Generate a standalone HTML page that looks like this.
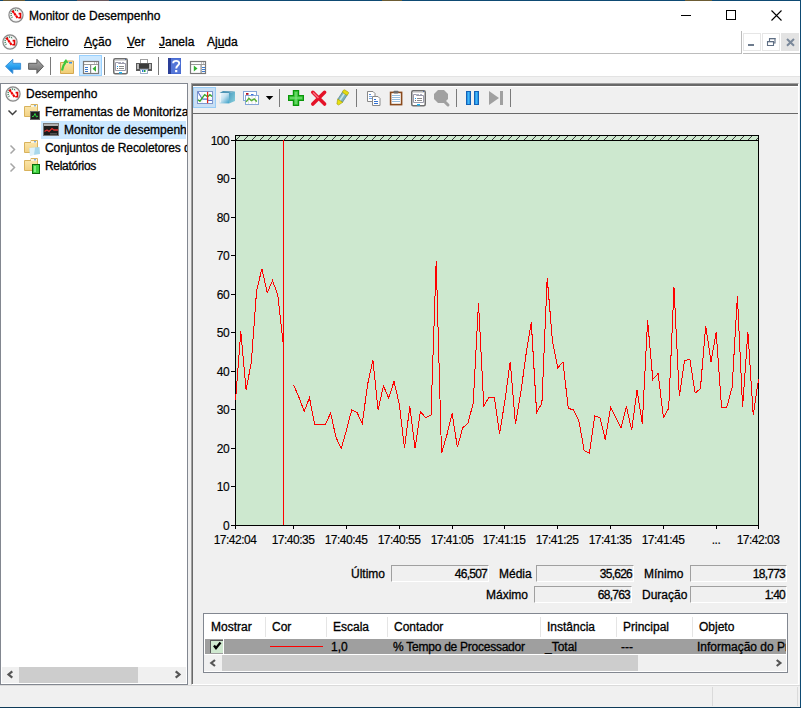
<!DOCTYPE html>
<html><head><meta charset="utf-8">
<style>
html,body{margin:0;padding:0;}
body{width:801px;height:708px;overflow:hidden;position:relative;background:#f0f0f0;font-family:"Liberation Sans",sans-serif;font-size:12px;color:#000;-webkit-text-stroke:0.3px #000;}
.a{position:absolute;}
.t{position:absolute;white-space:nowrap;line-height:14px;}
.yl{position:absolute;left:190px;width:39px;text-align:right;line-height:16px;font-size:12px;letter-spacing:-0.6px;-webkit-text-stroke:0.15px #000;}
.xl{position:absolute;top:533px;width:80px;text-align:center;line-height:14px;font-size:12px;letter-spacing:-0.5px;-webkit-text-stroke:0.15px #000;}
.box{position:absolute;height:17px;letter-spacing:-0.75px;background:#f0f0f0;border-top:1px solid #a0a0a0;border-left:1px solid #a0a0a0;border-bottom:1px solid #fff;border-right:1px solid #fff;box-sizing:border-box;text-align:right;padding-right:1px;line-height:16px;}
.u{text-decoration:underline;}
</style></head><body>
<!-- window frame -->
<div class="a" style="left:0;top:0;width:801px;height:1px;background:#0e4a73"></div>
<div class="a" style="left:3px;top:0;width:22px;height:1px;background:#6c5c34"></div>
<div class="a" style="left:77px;top:0;width:32px;height:1px;background:#6e5a5e"></div>
<div class="a" style="left:382px;top:0;width:20px;height:1px;background:#6c5c34"></div>
<div class="a" style="left:685px;top:0;width:27px;height:1px;background:#6c5c34"></div>
<div class="a" style="left:800px;top:0;width:1px;height:708px;background:#0e4a73"></div>
<div class="a" style="left:0;top:707px;width:801px;height:1px;background:#0d3a58"></div>
<!-- title bar -->
<div class="a" style="left:0;top:1px;width:800px;height:30px;background:#fff"></div>
<div class="t" style="left:29px;top:9px;">Monitor de Desempenho</div>
<svg class="a" style="left:0;top:0" width="801" height="31">
<path d="M681,15.5 H691" stroke="#000" stroke-width="1"/>
<rect x="726.5" y="10.5" width="9" height="9" fill="none" stroke="#000" stroke-width="1"/>
<path d="M771.5,10.5 L781.5,20.5 M781.5,10.5 L771.5,20.5" stroke="#000" stroke-width="1.1"/>
</svg>
<!-- menu bar -->
<div class="a" style="left:0;top:31px;width:800px;height:23px;background:#fff"></div>
<div class="a" style="left:0;top:53px;width:742px;height:1px;background:#bcbcbc"></div>
<div class="a" style="left:741px;top:31px;width:1px;height:23px;background:#bcbcbc"></div>
<div class="a" style="left:743px;top:53px;width:57px;height:1px;background:#bcbcbc"></div>
<div class="t" style="left:26px;top:35px;"><span class="u">F</span>icheiro</div>
<div class="t" style="left:84px;top:35px;"><span class="u">A</span>ção</div>
<div class="t" style="left:127px;top:35px;"><span class="u">V</span>er</div>
<div class="t" style="left:159px;top:35px;"><span class="u">J</span>anela</div>
<div class="t" style="left:207px;top:35px;">Aj<span class="u">u</span>da</div>
<!-- MDI buttons -->
<div class="a" style="left:743px;top:33px;width:16px;height:16px;border:1px solid #e6e6e6;background:#fff"></div>
<div class="a" style="left:762px;top:33px;width:16px;height:16px;border:1px solid #e6e6e6;background:#fff"></div>
<div class="a" style="left:781px;top:33px;width:18px;height:18px;background:#e3e3e3"></div>
<svg class="a" style="left:740px;top:30px" width="60" height="24">
<rect x="8" y="14" width="6" height="2" fill="#6d7b8d"/>
<path d="M27.5,11.5 h6 v4 h-6 z M29.5,11 v-2.5 h5.5 v4.5 h-1.5" fill="none" stroke="#5f6f84" stroke-width="1.1"/><rect x="27" y="11" width="7" height="1.3" fill="#5f6f84"/><rect x="29" y="8" width="6.5" height="1.3" fill="#5f6f84"/>
<path d="M47,9 L54,15.8 M54,9 L47,15.8" stroke="#7a889a" stroke-width="2"/>
</svg>
<!-- toolbar -->
<div class="a" style="left:0;top:54px;width:800px;height:22px;background:#fff"></div>
<div class="a" style="left:0;top:76px;width:800px;height:1px;background:#e3e3e3"></div>
<div class="a" style="left:79px;top:55px;width:23px;height:21px;box-sizing:border-box;background:#cce8ff;border:1px solid #99d1ff"></div>
<svg class="a" style="left:0;top:50px" width="220" height="30">
<defs>
<linearGradient id="gb" x1="0" y1="0" x2="0" y2="1"><stop offset="0" stop-color="#6cc8fa"/><stop offset="0.5" stop-color="#2aa2f0"/><stop offset="1" stop-color="#0a6cc8"/></linearGradient>
<linearGradient id="gg" x1="0" y1="0" x2="0" y2="1"><stop offset="0" stop-color="#b0b0b0"/><stop offset="0.5" stop-color="#8c8c8c"/><stop offset="1" stop-color="#6e6e6e"/></linearGradient>
<linearGradient id="gf" x1="0" y1="0" x2="0" y2="1"><stop offset="0" stop-color="#fbe7a8"/><stop offset="1" stop-color="#f0cc74"/></linearGradient>
</defs>
<!-- back -->
<path d="M5.5,16.3 L12.8,9.3 V13.3 H20.6 V19.3 H12.8 V23.4 Z" fill="url(#gb)" stroke="#3d92d8" stroke-width="1" stroke-linejoin="round"/>
<!-- forward -->
<path d="M43.5,16.3 L36.9,9.3 V13.3 H28.6 V19.3 H36.9 V23.4 Z" fill="url(#gg)" stroke="#5c5c5c" stroke-width="1" stroke-linejoin="round"/>
<rect x="50" y="7" width="1" height="18" fill="#7a7a7a"/>
<!-- folder up -->
<path d="M60.5,12.5 H66 L67,11 H73.5 V23.5 H60.5 Z" fill="url(#gf)" stroke="#d4a850" stroke-width="1"/>
<rect x="69" y="12" width="3" height="1.5" fill="#3a8ee8"/>
<path d="M62,20.5 C62.5,17 64,14 65.5,12.5" fill="none" stroke="#3cc83c" stroke-width="2.2"/>
<path d="M63,12.5 L66,9 L68.5,13 Z" fill="#3cc83c"/>
<!-- window with left pane -->
<rect x="83.5" y="11.5" width="15" height="12" fill="#fff" stroke="#7a7a7a" stroke-width="1.2"/>
<rect x="84" y="14" width="14" height="1" fill="#9a9a9a"/><rect x="94" y="12.5" width="1" height="1" fill="#8a8a8a"/><rect x="96" y="12.5" width="1" height="1" fill="#8a8a8a"/>
<rect x="90" y="15" width="1.2" height="8" fill="#8a8a8a"/>
<rect x="85" y="17" width="3" height="1" fill="#3a7ad0"/><rect x="85" y="19" width="3" height="1" fill="#3a7ad0"/><rect x="85" y="21" width="3" height="1" fill="#3a7ad0"/>
<path d="M96,15.8 L92.5,18.8 L96,21.8 Z" fill="#30b030"/>
<rect x="104" y="7" width="1" height="18" fill="#7a7a7a"/>
<!-- properties -->
<rect x="113.75" y="8.75" width="13.5" height="15" rx="1.5" fill="#fff" stroke="#6e6e6e" stroke-width="1.5"/>
<rect x="115" y="10" width="11" height="1" fill="#d8d8d8"/>
<rect x="125" y="9" width="1" height="1" fill="#4a6aa8"/>
<path d="M115.5,12.5 H118.5 V13.5 H125.5 V20.5 H115.5 Z" fill="#fff" stroke="#9a9aaa" stroke-width="1"/>
<rect x="119" y="12" width="2" height="1" fill="#b0b0c0"/><rect x="122" y="12" width="2" height="1" fill="#b0b0c0"/>
<rect x="117" y="16" width="1" height="1" fill="#10a0f8"/><rect x="119" y="16" width="5" height="1" fill="#8a8a8a"/>
<rect x="117" y="18" width="1" height="1" fill="#707070"/><rect x="119" y="18" width="5" height="1" fill="#8a8a8a"/>
<rect x="119" y="22" width="3" height="1.5" fill="#20b8f8"/>
<!-- printer -->
<rect x="140.5" y="9.5" width="7" height="4" fill="#fff" stroke="#a0a0a0" stroke-width="1"/>
<rect x="136" y="13" width="16" height="8" fill="#5a5a5a"/>
<rect x="137" y="14" width="2" height="5" fill="#b8b8b8"/><rect x="149" y="14" width="2" height="5" fill="#b8b8b8"/>
<rect x="139" y="14" width="10" height="4" fill="#3a3a3a"/>
<rect x="140.5" y="19.5" width="7" height="4" fill="#fff" stroke="#a0b0c8" stroke-width="1"/>
<rect x="142" y="20" width="1.5" height="2" fill="#2a7ad8"/><rect x="144" y="20" width="1.5" height="2" fill="#20a040"/>
<rect x="158" y="7" width="1" height="18" fill="#7a7a7a"/>
<!-- help -->
<rect x="168" y="8" width="13" height="16" fill="#3f62cc"/>
<rect x="168" y="8" width="3" height="16" fill="#2a3e98"/>
<rect x="171" y="8.5" width="9.5" height="15" fill="#5576d8"/>
<path d="M173.2,13.2 C173.2,10.2 179.2,10 179.2,13.2 C179.2,15.6 176.2,15.6 176.2,18.6" fill="none" stroke="#fff" stroke-width="1.9"/><rect x="175.1" y="20" width="2.2" height="2.2" fill="#fff"/>
<!-- window with play -->
<rect x="190.5" y="11.5" width="15" height="12" fill="#fff" stroke="#7a7a7a" stroke-width="1.2"/>
<rect x="191" y="14" width="14" height="1" fill="#9a9a9a"/><rect x="201" y="12.5" width="1" height="1" fill="#8a8a8a"/><rect x="203" y="12.5" width="1" height="1" fill="#8a8a8a"/>
<rect x="200.5" y="15" width="1.2" height="8" fill="#8a8a8a"/>
<rect x="202" y="17" width="3" height="1" fill="#3a7ad0"/><rect x="202" y="19" width="3" height="1" fill="#3a7ad0"/><rect x="202" y="21" width="3" height="1" fill="#3a7ad0"/>
<path d="M193.8,15.5 L197.5,18.5 L193.8,21.5 Z" fill="#30b030"/>
</svg>

<!-- left pane -->
<div class="a" style="left:0;top:83px;width:188px;height:602px;box-sizing:border-box;border:1px solid #828790;background:#fff"></div>
<div class="a" style="left:41px;top:121px;width:145px;height:18px;background:#cce8ff"></div>
<svg class="a" style="left:0;top:80px" width="70" height="100">
<defs>
<linearGradient id="gf2" x1="0" y1="0" x2="0" y2="1"><stop offset="0" stop-color="#fce9b0"/><stop offset="1" stop-color="#f2d184"/></linearGradient>
<g id="fold">
<path d="M0.5,2.5 H7 V0.5 H13.5 V12.5 H0.5 Z" fill="url(#gf2)" stroke="#d8b25c" stroke-width="1"/>
<rect x="7" y="1" width="6" height="2" fill="#fff6d8"/>
<rect x="10" y="1.3" width="2" height="1" fill="#4a90e0"/>
</g>
</defs>
<!-- chevron down -->
<path d="M8.5,30.5 L12.5,34.5 L16.5,30.5" fill="none" stroke="#404040" stroke-width="1.5"/>
<!-- folder 1 -->
<use href="#fold" x="24" y="24"/>
<rect x="30.5" y="31.5" width="9" height="8" fill="#1e1e1e" stroke="#686868" stroke-width="1"/>
<path d="M32,36.5 L33.5,36.5 L35,33.5 L36.5,37 L38,36" fill="none" stroke="#30d040" stroke-width="1"/>
<!-- monitor icon -->
<rect x="43.5" y="43.5" width="15" height="12" fill="#1c1c1c" stroke="#787878" stroke-width="1"/>
<rect x="44" y="44" width="14" height="2" fill="#b0b0b0"/>
<path d="M44.5,51.5 L47,50 L49,51.5 L52,48.5 L54,50 L58,50" fill="none" stroke="#e03030" stroke-width="1.3"/>
<rect x="50" y="53.5" width="7" height="0.8" fill="#808080"/>
<!-- chevron right 1 -->
<path d="M10.5,65.5 L14.5,69.5 L10.5,73.5" fill="none" stroke="#a6a6a6" stroke-width="1.5"/>
<use href="#fold" x="24" y="60"/>
<path d="M29.5,68 L39.5,67 L40,74 L30,75.5 Z" fill="#a8d8ec"/>
<path d="M29.5,68 L35,67.5 L34,75 L30,75.5 Z" fill="#dff2fa"/>
<!-- chevron right 2 -->
<path d="M10.5,83.5 L14.5,87.5 L10.5,91.5" fill="none" stroke="#a6a6a6" stroke-width="1.5"/>
<use href="#fold" x="24" y="78"/>
<rect x="32.5" y="84.5" width="7" height="9" fill="#40d040" stroke="#0a6a0a" stroke-width="1"/>
<rect x="34" y="86" width="2" height="6" fill="#80f080"/>
</svg>

<svg class="a" style="left:0;top:0" width="40" height="120">
<defs>
<g id="gauge">
<circle cx="8" cy="8" r="7" fill="#fdfdfd" stroke="#8a8a8a" stroke-width="1.4"/>
<circle cx="8" cy="8" r="6" fill="none" stroke="#e2e2e2" stroke-width="0.6"/>
<path d="M4.4,10.6 A4.3,4.3 0 0 1 10.6,4.4" fill="none" stroke="#4f8a6a" stroke-width="1.5" stroke-dasharray="1.1,0.8"/>
<path d="M10.6,6.6 H12.5 V10.7 H10.3" fill="none" stroke="#e00000" stroke-width="1.6"/>
<path d="M4.4,3.7 L9.6,10.9" fill="none" stroke="#f00000" stroke-width="2.1" stroke-dasharray="2.6,0.5"/>
</g>
</defs>
<use href="#gauge" x="8" y="7"/>
<use href="#gauge" x="2" y="34"/>
<use href="#gauge" x="5" y="86"/>
</svg>

<div class="t" style="left:26px;top:87px;">Desempenho</div>
<div class="t" style="left:45px;top:105px;width:142px;overflow:hidden">Ferramentas de Monitorização</div>
<div class="a" style="left:41px;top:121px;width:145px;height:18px;overflow:hidden"><div class="t" style="left:23px;top:2px;">Monitor de desempenho</div></div>
<div class="t" style="left:45px;top:141px;width:142px;overflow:hidden;letter-spacing:-0.1px">Conjuntos de Recoletores de Dados</div>
<div class="t" style="left:45px;top:159px;letter-spacing:-0.3px">Relatórios</div>
<!-- left scrollbar -->
<div class="a" style="left:2px;top:667px;width:184px;height:16px;background:#f0f0f0"></div>
<div class="a" style="left:19px;top:667px;width:119px;height:16px;background:#cdcdcd"></div>
<svg class="a" style="left:0;top:660px" width="188" height="30">
<path d="M12.3,11.3 L8.5,14.5 L12.3,17.7" fill="none" stroke="#555" stroke-width="2.2"/>
<path d="M175.7,11.3 L179.5,14.5 L175.7,17.7" fill="none" stroke="#555" stroke-width="2.2"/>
</svg>
<!-- right pane -->
<div class="a" style="left:191px;top:83px;width:608px;height:602px;box-sizing:border-box;border-top:1px solid #a0a0a0;border-left:1px solid #a0a0a0;border-right:1px solid #fff;border-bottom:1px solid #fff;"></div>
<div class="a" style="left:192px;top:84px;width:606px;height:600px;box-sizing:border-box;border-top:2px solid #696969;border-left:1px solid #696969;"></div>
<div class="a" style="left:193px;top:113px;width:605px;height:1px;background:#696969"></div>
<div class="a" style="left:193px;top:87px;width:23px;height:21px;box-sizing:border-box;background:#c9dff4;border:1px solid #99cdf6"></div>
<div class="a" style="left:193px;top:86px;width:605px;height:1px;background:#fff"></div>
<svg class="a" style="left:190px;top:85px" width="330" height="25">
<defs>
<linearGradient id="gp" x1="0" y1="0" x2="1" y2="0"><stop offset="0" stop-color="#1a7ad8"/><stop offset="0.5" stop-color="#40b8f8"/><stop offset="1" stop-color="#1a7ad8"/></linearGradient>
<linearGradient id="gc" x1="0" y1="0" x2="1" y2="1"><stop offset="0" stop-color="#f4fafe"/><stop offset="0.45" stop-color="#c6e2f0"/><stop offset="1" stop-color="#3aa0c8"/></linearGradient><linearGradient id="gc2" x1="0" y1="0" x2="1" y2="1"><stop offset="0" stop-color="#4a9cc0"/><stop offset="1" stop-color="#8ad0dc"/></linearGradient>
</defs>
<!-- graph icon -->
<rect x="7.5" y="6.5" width="15" height="12" fill="#fff" stroke="#7d96cc" stroke-width="1"/>
<path d="M8,10 H22 M8,14 H22 M12,7 V18 M17,7 V18" stroke="#e2eaf8" stroke-width="1"/>
<path d="M8,7 L12.1,13.7 L12.9,14.1 H16.9 L18.4,15.5 H22" fill="none" stroke="#5a74cc" stroke-width="1.1"/>
<path d="M7.9,14.8 L9.9,16.3 L12.5,12.6 L14.7,9.7 L16.2,10.8 L17.6,11.9 L19.9,9.7 L22,11.5" fill="none" stroke="#38a828" stroke-width="1.4"/>
<rect x="17" y="6.8" width="1.2" height="11.4" fill="#e82818"/>
<!-- cube -->
<path d="M29.5,8 L33,6 L45,6.5 L39,8 Z" fill="#4e94b4"/>
<path d="M39,8 L45,6.5 V16 L39,18.4 Z" fill="url(#gc2)"/>
<rect x="29.5" y="8" width="9.5" height="10.4" fill="url(#gc)"/>
<path d="M30.5,9 V17.5" stroke="#fff" stroke-width="0.8" opacity="0.8"/>
<!-- report icon -->
<rect x="53.5" y="6.5" width="13" height="9" fill="#fff" stroke="#86a6d8" stroke-width="1"/>
<rect x="56" y="8" width="2.5" height="1.8" fill="#b01020"/><rect x="61" y="9" width="2.5" height="1" fill="#3a70e0"/>
<rect x="55.5" y="10.5" width="13" height="9" fill="#fff" stroke="#86a6d8" stroke-width="1"/>
<path d="M58.5,11 V19 M62,11 V19 M65.5,11 V19" stroke="#e4e4e4" stroke-width="1"/><path d="M56.1,16.9 L58.9,13.4 L61.4,15.6 L64.2,14 L66.8,16.6" fill="none" stroke="#58b038" stroke-width="1.5"/>
<!-- dropdown -->
<path d="M75.8,11 H83.3 L79.5,15 Z" fill="#000"/>
<rect x="89" y="4" width="1" height="18" fill="#7a7a7a"/>
<!-- plus -->
<path d="M103.4,5.6 H108.6 V10.6 H113.4 V15.4 H108.6 V20.4 H103.4 V15.4 H98.6 V10.6 H103.4 Z" fill="#40c840" stroke="#0a960a" stroke-width="1.2"/>
<path d="M106,7 V19 M100,13 H112" stroke="#86e486" stroke-width="1"/>
<!-- red x -->
<path d="M122.8,7.3 L134.6,19.1 M134.6,7.3 L122.8,19.1" stroke="#e41228" stroke-width="3.6" stroke-linecap="round"/>
<path d="M123,7.5 L128.5,13" stroke="#f87080" stroke-width="1.5"/>
<!-- pencil -->
<g transform="translate(151.8,13.2) rotate(33)">
<rect x="-2.8" y="-6" width="5.6" height="9" fill="#7fb2bc" stroke="#4f7f88" stroke-width="0.6"/>
<rect x="-1.2" y="-6" width="1.6" height="9" fill="#c8e4e8"/>
<rect x="-3" y="-8.6" width="6" height="3.4" rx="1" fill="#e6dc10" stroke="#9a9400" stroke-width="0.5"/>
<path d="M-3,3 H3 L1,7.5 H-1 Z" fill="#e8e010" stroke="#9a9400" stroke-width="0.5"/>
</g>
<rect x="166" y="4" width="1" height="18" fill="#7a7a7a"/>
<!-- copy -->
<path d="M177.5,6.5 H183 L185,8.5 V16.5 H177.5 Z" fill="#fff" stroke="#888" stroke-width="1"/>
<rect x="179" y="9" width="2" height="0.8" fill="#3070d0"/><rect x="179" y="11" width="3" height="0.8" fill="#5090e0"/><rect x="179" y="13" width="3" height="0.8" fill="#5090e0"/>
<path d="M182.5,11.5 H188 L190,13.5 V20.5 H182.5 Z" fill="#fff" stroke="#888" stroke-width="1"/>
<rect x="184" y="14" width="2" height="1" fill="#3070d0"/><rect x="184" y="16" width="4" height="1" fill="#3070d0"/><rect x="184" y="18" width="4" height="1" fill="#3070d0"/>
<!-- clipboard -->
<rect x="200.6" y="7.4" width="11" height="12.2" fill="#fff" stroke="#8a4a1c" stroke-width="1.6"/>
<rect x="203.5" y="5.8" width="5" height="2.6" rx="0.8" fill="#6c6c6c"/>
<path d="M202,10.5 H210 M202,12.5 H210 M202,14.5 H210 M202,16.5 H210" stroke="#8ab4d8" stroke-width="0.9"/>
<!-- properties -->
<rect x="221.75" y="5.75" width="13.5" height="15" rx="1.5" fill="#fff" stroke="#6e6e6e" stroke-width="1.5"/>
<rect x="223" y="7" width="11" height="1" fill="#d8d8d8"/>
<rect x="233" y="6" width="1" height="1" fill="#4a6aa8"/>
<path d="M223.5,9.5 H226.5 V10.5 H233.5 V17.5 H223.5 Z" fill="#fff" stroke="#9a9aaa" stroke-width="1"/>
<rect x="227" y="9" width="2" height="1" fill="#b0b0c0"/><rect x="230" y="9" width="2" height="1" fill="#b0b0c0"/>
<rect x="225" y="13" width="1" height="1" fill="#10a0f8"/><rect x="227" y="13" width="5" height="1" fill="#8a8a8a"/>
<rect x="225" y="15" width="1" height="1" fill="#707070"/><rect x="227" y="15" width="5" height="1" fill="#8a8a8a"/>
<rect x="227" y="19" width="3" height="1.5" fill="#20b8f8"/>
<!-- magnifier -->
<path d="M246,5 H252 L256,9 V14 L252,18 H246 L242,14 V9 Z" fill="#a0a0a0" transform="translate(2,0) scale(1,1)"/>
<path d="M253.5,15.5 L258,20" stroke="#a0a0a0" stroke-width="3" stroke-linecap="round"/>
<rect x="266" y="4" width="1" height="18" fill="#7a7a7a"/>
<!-- pause -->
<rect x="276.5" y="6.5" width="4" height="13" fill="url(#gp)" stroke="#1262b8" stroke-width="1"/>
<rect x="284.5" y="6.5" width="4" height="13" fill="url(#gp)" stroke="#1262b8" stroke-width="1"/>
<!-- next -->
<path d="M299,6 L309,13 L299,20 Z" fill="#a0a0a0"/>
<rect x="310" y="6" width="3" height="14" fill="#a0a0a0"/>
<rect x="320" y="4" width="1" height="18" fill="#7a7a7a"/>
</svg>

<svg class="a" style="left:0;top:0" width="801" height="708">
<defs><clipPath id="hc"><rect x="236" y="136" width="522" height="4"/></clipPath></defs>
<rect x="235" y="135" width="524" height="391" fill="#cde8cf"/><path d="M236,139 h1 v1 h-1 z M237,138 h1 v1 h-1 z M238,137 h1 v1 h-1 z M239,136 h1 v1 h-1 z M244,139 h1 v1 h-1 z M245,138 h1 v1 h-1 z M246,137 h1 v1 h-1 z M247,136 h1 v1 h-1 z M252,139 h1 v1 h-1 z M253,138 h1 v1 h-1 z M254,137 h1 v1 h-1 z M255,136 h1 v1 h-1 z M260,139 h1 v1 h-1 z M261,138 h1 v1 h-1 z M262,137 h1 v1 h-1 z M263,136 h1 v1 h-1 z M268,139 h1 v1 h-1 z M269,138 h1 v1 h-1 z M270,137 h1 v1 h-1 z M271,136 h1 v1 h-1 z M276,139 h1 v1 h-1 z M277,138 h1 v1 h-1 z M278,137 h1 v1 h-1 z M279,136 h1 v1 h-1 z M284,139 h1 v1 h-1 z M285,138 h1 v1 h-1 z M286,137 h1 v1 h-1 z M287,136 h1 v1 h-1 z M292,139 h1 v1 h-1 z M293,138 h1 v1 h-1 z M294,137 h1 v1 h-1 z M295,136 h1 v1 h-1 z M300,139 h1 v1 h-1 z M301,138 h1 v1 h-1 z M302,137 h1 v1 h-1 z M303,136 h1 v1 h-1 z M308,139 h1 v1 h-1 z M309,138 h1 v1 h-1 z M310,137 h1 v1 h-1 z M311,136 h1 v1 h-1 z M316,139 h1 v1 h-1 z M317,138 h1 v1 h-1 z M318,137 h1 v1 h-1 z M319,136 h1 v1 h-1 z M324,139 h1 v1 h-1 z M325,138 h1 v1 h-1 z M326,137 h1 v1 h-1 z M327,136 h1 v1 h-1 z M332,139 h1 v1 h-1 z M333,138 h1 v1 h-1 z M334,137 h1 v1 h-1 z M335,136 h1 v1 h-1 z M340,139 h1 v1 h-1 z M341,138 h1 v1 h-1 z M342,137 h1 v1 h-1 z M343,136 h1 v1 h-1 z M348,139 h1 v1 h-1 z M349,138 h1 v1 h-1 z M350,137 h1 v1 h-1 z M351,136 h1 v1 h-1 z M356,139 h1 v1 h-1 z M357,138 h1 v1 h-1 z M358,137 h1 v1 h-1 z M359,136 h1 v1 h-1 z M364,139 h1 v1 h-1 z M365,138 h1 v1 h-1 z M366,137 h1 v1 h-1 z M367,136 h1 v1 h-1 z M372,139 h1 v1 h-1 z M373,138 h1 v1 h-1 z M374,137 h1 v1 h-1 z M375,136 h1 v1 h-1 z M380,139 h1 v1 h-1 z M381,138 h1 v1 h-1 z M382,137 h1 v1 h-1 z M383,136 h1 v1 h-1 z M388,139 h1 v1 h-1 z M389,138 h1 v1 h-1 z M390,137 h1 v1 h-1 z M391,136 h1 v1 h-1 z M396,139 h1 v1 h-1 z M397,138 h1 v1 h-1 z M398,137 h1 v1 h-1 z M399,136 h1 v1 h-1 z M404,139 h1 v1 h-1 z M405,138 h1 v1 h-1 z M406,137 h1 v1 h-1 z M407,136 h1 v1 h-1 z M412,139 h1 v1 h-1 z M413,138 h1 v1 h-1 z M414,137 h1 v1 h-1 z M415,136 h1 v1 h-1 z M420,139 h1 v1 h-1 z M421,138 h1 v1 h-1 z M422,137 h1 v1 h-1 z M423,136 h1 v1 h-1 z M428,139 h1 v1 h-1 z M429,138 h1 v1 h-1 z M430,137 h1 v1 h-1 z M431,136 h1 v1 h-1 z M436,139 h1 v1 h-1 z M437,138 h1 v1 h-1 z M438,137 h1 v1 h-1 z M439,136 h1 v1 h-1 z M444,139 h1 v1 h-1 z M445,138 h1 v1 h-1 z M446,137 h1 v1 h-1 z M447,136 h1 v1 h-1 z M452,139 h1 v1 h-1 z M453,138 h1 v1 h-1 z M454,137 h1 v1 h-1 z M455,136 h1 v1 h-1 z M460,139 h1 v1 h-1 z M461,138 h1 v1 h-1 z M462,137 h1 v1 h-1 z M463,136 h1 v1 h-1 z M468,139 h1 v1 h-1 z M469,138 h1 v1 h-1 z M470,137 h1 v1 h-1 z M471,136 h1 v1 h-1 z M476,139 h1 v1 h-1 z M477,138 h1 v1 h-1 z M478,137 h1 v1 h-1 z M479,136 h1 v1 h-1 z M484,139 h1 v1 h-1 z M485,138 h1 v1 h-1 z M486,137 h1 v1 h-1 z M487,136 h1 v1 h-1 z M492,139 h1 v1 h-1 z M493,138 h1 v1 h-1 z M494,137 h1 v1 h-1 z M495,136 h1 v1 h-1 z M500,139 h1 v1 h-1 z M501,138 h1 v1 h-1 z M502,137 h1 v1 h-1 z M503,136 h1 v1 h-1 z M508,139 h1 v1 h-1 z M509,138 h1 v1 h-1 z M510,137 h1 v1 h-1 z M511,136 h1 v1 h-1 z M516,139 h1 v1 h-1 z M517,138 h1 v1 h-1 z M518,137 h1 v1 h-1 z M519,136 h1 v1 h-1 z M524,139 h1 v1 h-1 z M525,138 h1 v1 h-1 z M526,137 h1 v1 h-1 z M527,136 h1 v1 h-1 z M532,139 h1 v1 h-1 z M533,138 h1 v1 h-1 z M534,137 h1 v1 h-1 z M535,136 h1 v1 h-1 z M540,139 h1 v1 h-1 z M541,138 h1 v1 h-1 z M542,137 h1 v1 h-1 z M543,136 h1 v1 h-1 z M548,139 h1 v1 h-1 z M549,138 h1 v1 h-1 z M550,137 h1 v1 h-1 z M551,136 h1 v1 h-1 z M556,139 h1 v1 h-1 z M557,138 h1 v1 h-1 z M558,137 h1 v1 h-1 z M559,136 h1 v1 h-1 z M564,139 h1 v1 h-1 z M565,138 h1 v1 h-1 z M566,137 h1 v1 h-1 z M567,136 h1 v1 h-1 z M572,139 h1 v1 h-1 z M573,138 h1 v1 h-1 z M574,137 h1 v1 h-1 z M575,136 h1 v1 h-1 z M580,139 h1 v1 h-1 z M581,138 h1 v1 h-1 z M582,137 h1 v1 h-1 z M583,136 h1 v1 h-1 z M588,139 h1 v1 h-1 z M589,138 h1 v1 h-1 z M590,137 h1 v1 h-1 z M591,136 h1 v1 h-1 z M596,139 h1 v1 h-1 z M597,138 h1 v1 h-1 z M598,137 h1 v1 h-1 z M599,136 h1 v1 h-1 z M604,139 h1 v1 h-1 z M605,138 h1 v1 h-1 z M606,137 h1 v1 h-1 z M607,136 h1 v1 h-1 z M612,139 h1 v1 h-1 z M613,138 h1 v1 h-1 z M614,137 h1 v1 h-1 z M615,136 h1 v1 h-1 z M620,139 h1 v1 h-1 z M621,138 h1 v1 h-1 z M622,137 h1 v1 h-1 z M623,136 h1 v1 h-1 z M628,139 h1 v1 h-1 z M629,138 h1 v1 h-1 z M630,137 h1 v1 h-1 z M631,136 h1 v1 h-1 z M636,139 h1 v1 h-1 z M637,138 h1 v1 h-1 z M638,137 h1 v1 h-1 z M639,136 h1 v1 h-1 z M644,139 h1 v1 h-1 z M645,138 h1 v1 h-1 z M646,137 h1 v1 h-1 z M647,136 h1 v1 h-1 z M652,139 h1 v1 h-1 z M653,138 h1 v1 h-1 z M654,137 h1 v1 h-1 z M655,136 h1 v1 h-1 z M660,139 h1 v1 h-1 z M661,138 h1 v1 h-1 z M662,137 h1 v1 h-1 z M663,136 h1 v1 h-1 z M668,139 h1 v1 h-1 z M669,138 h1 v1 h-1 z M670,137 h1 v1 h-1 z M671,136 h1 v1 h-1 z M676,139 h1 v1 h-1 z M677,138 h1 v1 h-1 z M678,137 h1 v1 h-1 z M679,136 h1 v1 h-1 z M684,139 h1 v1 h-1 z M685,138 h1 v1 h-1 z M686,137 h1 v1 h-1 z M687,136 h1 v1 h-1 z M692,139 h1 v1 h-1 z M693,138 h1 v1 h-1 z M694,137 h1 v1 h-1 z M695,136 h1 v1 h-1 z M700,139 h1 v1 h-1 z M701,138 h1 v1 h-1 z M702,137 h1 v1 h-1 z M703,136 h1 v1 h-1 z M708,139 h1 v1 h-1 z M709,138 h1 v1 h-1 z M710,137 h1 v1 h-1 z M711,136 h1 v1 h-1 z M716,139 h1 v1 h-1 z M717,138 h1 v1 h-1 z M718,137 h1 v1 h-1 z M719,136 h1 v1 h-1 z M724,139 h1 v1 h-1 z M725,138 h1 v1 h-1 z M726,137 h1 v1 h-1 z M727,136 h1 v1 h-1 z M732,139 h1 v1 h-1 z M733,138 h1 v1 h-1 z M734,137 h1 v1 h-1 z M735,136 h1 v1 h-1 z M740,139 h1 v1 h-1 z M741,138 h1 v1 h-1 z M742,137 h1 v1 h-1 z M743,136 h1 v1 h-1 z M748,139 h1 v1 h-1 z M749,138 h1 v1 h-1 z M750,137 h1 v1 h-1 z M751,136 h1 v1 h-1 z M756,139 h1 v1 h-1 z M757,138 h1 v1 h-1 z" fill="#3a3a3a"/><path d="M235.5,135 V526 M758.5,135 V526 M235,135.5 H759 M235,140.5 H759 M231,525.5 H759" stroke="#000" stroke-width="1" fill="none"/><path d="M231,140.5 H235 M231,178.5 H235 M231,217.5 H235 M231,255.5 H235 M231,294.5 H235 M231,332.5 H235 M231,371.5 H235 M231,409.5 H235 M231,448.5 H235 M231,486.5 H235 M231,525.5 H235" stroke="#000" stroke-width="1"/><path d="M235.5,526 V529 M293.5,526 V529 M346.5,526 V529 M399.5,526 V529 M452.5,526 V529 M504.5,526 V529 M557.5,526 V529 M610.5,526 V529 M663.5,526 V529 M716.5,526 V529 M758.5,526 V529" stroke="#000" stroke-width="1"/><polyline points="235.5,400.5 240.8,331.5 246.1,389.9 251.3,362.5 256.6,290.5 261.9,268.8 267.2,292.8 272.5,280.6 277.8,294.9 283.0,341.5" fill="none" stroke="#ff0000" stroke-width="1" shape-rendering="crispEdges"/><polyline points="293.6,384.9 298.9,397.3 304.2,411.3 309.5,397.8 314.7,424.7 320.0,424.7 325.3,424.7 330.6,413.0 335.9,437.1 341.2,448.6 346.4,430.3 351.7,410.0 357.0,412.5 362.3,423.5 367.6,384.5 372.9,360.0 378.1,410.0 383.4,385.9 388.7,398.1 394.0,381.5 399.3,404.1 404.5,448.1 409.8,406.5 415.1,448.1 420.4,411.7 425.7,417.6 431.0,415.1 436.2,260.7 441.5,453.2 446.8,435.4 452.1,413.4 457.4,447.3 462.7,427.8 467.9,423.5 473.2,403.2 478.5,302.7 483.8,405.8 489.1,397.3 494.4,397.3 499.6,433.7 504.9,400.8 510.2,361.7 515.5,424.4 520.8,392.7 526.1,353.9 531.3,322.5 536.6,412.5 541.9,403.2 547.2,277.6 552.5,341.5 557.8,367.6 563.0,362.2 568.3,408.3 573.6,410.0 578.9,421.0 584.2,450.7 589.4,453.2 594.7,415.9 600.0,417.6 605.3,439.7 610.6,407.5 615.9,417.6 621.1,427.8 626.4,406.6 631.7,430.3 637.0,390.0 642.3,423.5 647.6,320.5 652.8,379.5 658.1,373.5 663.4,417.6 668.7,408.3 674.0,287.5 679.3,396.4 684.5,360.8 689.8,359.1 695.1,393.0 700.4,388.8 705.7,325.8 711.0,361.6 716.2,332.3 721.5,407.1 726.8,407.1 732.1,387.3 737.4,296.3 742.6,407.1 747.9,331.9 753.2,415.0 758.5,379.4" fill="none" stroke="#ff0000" stroke-width="1" shape-rendering="crispEdges"/><path d="M283.5,140 V525" stroke="#ff0000" stroke-width="1"/>
</svg>
<div class="yl" style="top:133px">100</div><div class="yl" style="top:171px">90</div><div class="yl" style="top:210px">80</div><div class="yl" style="top:248px">70</div><div class="yl" style="top:287px">60</div><div class="yl" style="top:325px">50</div><div class="yl" style="top:364px">40</div><div class="yl" style="top:402px">30</div><div class="yl" style="top:441px">20</div><div class="yl" style="top:479px">10</div><div class="yl" style="top:518px">0</div>
<div class="xl" style="left:195px">17:42:04</div><div class="xl" style="left:253px">17:40:35</div><div class="xl" style="left:306px">17:40:45</div><div class="xl" style="left:359px">17:40:55</div><div class="xl" style="left:412px">17:41:05</div><div class="xl" style="left:464px">17:41:15</div><div class="xl" style="left:517px">17:41:25</div><div class="xl" style="left:570px">17:41:35</div><div class="xl" style="left:623px">17:41:45</div><div class="xl" style="left:676px">...</div><div class="xl" style="left:718px">17:42:03</div>
<!-- stats -->
<div class="t" style="left:351px;top:567px;">Último</div>
<div class="box" style="left:391px;top:565px;width:98px;">46,507</div>
<div class="t" style="left:499px;top:567px;">Média</div>
<div class="box" style="left:536px;top:565px;width:98px;">35,626</div>
<div class="t" style="left:644px;top:567px;">Mínimo</div>
<div class="box" style="left:690px;top:565px;width:97px;">18,773</div>
<div class="t" style="left:486px;top:588px;">Máximo</div>
<div class="box" style="left:534px;top:586px;width:98px;">68,763</div>
<div class="t" style="left:642px;top:588px;">Duração</div>
<div class="box" style="left:690px;top:586px;width:97px;">1:40</div>
<!-- counter list -->
<div class="a" style="left:203px;top:613px;width:585px;height:60px;box-sizing:border-box;border:1px solid #828790;background:#fff"></div>
<div class="a" style="left:205px;top:639px;width:581px;height:15px;background:#9f9f9f"></div>
<div class="a" style="left:223px;top:639px;width:1px;height:15px;background:#fff"></div>
<div class="a" style="left:210px;top:640px;width:13px;height:13px;box-sizing:border-box;background:#cfe8cf;border-top:1px solid #555;border-left:1px solid #555"></div>
<svg class="a" style="left:204px;top:636px" width="30" height="20"><path d="M10,9.5 L12,12.2 L16.5,6.5" fill="none" stroke="#000" stroke-width="2.3"/></svg>
<div class="a" style="left:270px;top:646px;width:53px;height:1px;background:#ff0000"></div>
<div class="a" style="left:265px;top:617px;width:1px;height:20px;background:#e5e5e5"></div>
<div class="a" style="left:326px;top:617px;width:1px;height:20px;background:#e5e5e5"></div>
<div class="a" style="left:387px;top:617px;width:1px;height:20px;background:#e5e5e5"></div>
<div class="a" style="left:540px;top:617px;width:1px;height:20px;background:#e5e5e5"></div>
<div class="a" style="left:616px;top:617px;width:1px;height:20px;background:#e5e5e5"></div>
<div class="a" style="left:692px;top:617px;width:1px;height:20px;background:#e5e5e5"></div>
<div class="t" style="left:211px;top:620px;">Mostrar</div>
<div class="t" style="left:272px;top:620px;">Cor</div>
<div class="t" style="left:333px;top:620px;">Escala</div>
<div class="t" style="left:394px;top:620px;">Contador</div>
<div class="t" style="left:547px;top:620px;">Instância</div>
<div class="t" style="left:623px;top:620px;">Principal</div>
<div class="t" style="left:699px;top:620px;">Objeto</div>
<div class="t" style="left:331px;top:640px;">1,0</div>
<div class="t" style="left:393px;top:640px;letter-spacing:-0.25px">% Tempo de Processador</div>
<div class="t" style="left:545px;top:640px;">_Total</div>
<div class="t" style="left:621px;top:640px;">---</div>
<div class="a" style="left:697px;top:639px;width:89px;height:15px;overflow:hidden"><div class="t" style="left:0;top:1px;">Informação do Processador</div></div>
<!-- list scrollbar -->
<div class="a" style="left:204px;top:655px;width:582px;height:16px;background:#f0f0f0"></div>
<div class="a" style="left:222px;top:655px;width:416px;height:16px;background:#cdcdcd"></div>
<svg class="a" style="left:200px;top:650px" width="590" height="26">
<path d="M15,10 L11.3,13 L15,16" fill="none" stroke="#555" stroke-width="2.2"/>
<path d="M576.7,10 L580.4,13 L576.7,16" fill="none" stroke="#555" stroke-width="2.2"/>
</svg>
<!-- status bar -->
<div class="a" style="left:0;top:685px;width:800px;height:1px;background:#dadada"></div>
<div class="a" style="left:712px;top:687px;width:1px;height:19px;background:#dadada"></div>
<div class="a" style="left:797px;top:687px;width:1px;height:19px;background:#dadada"></div>
</body></html>
